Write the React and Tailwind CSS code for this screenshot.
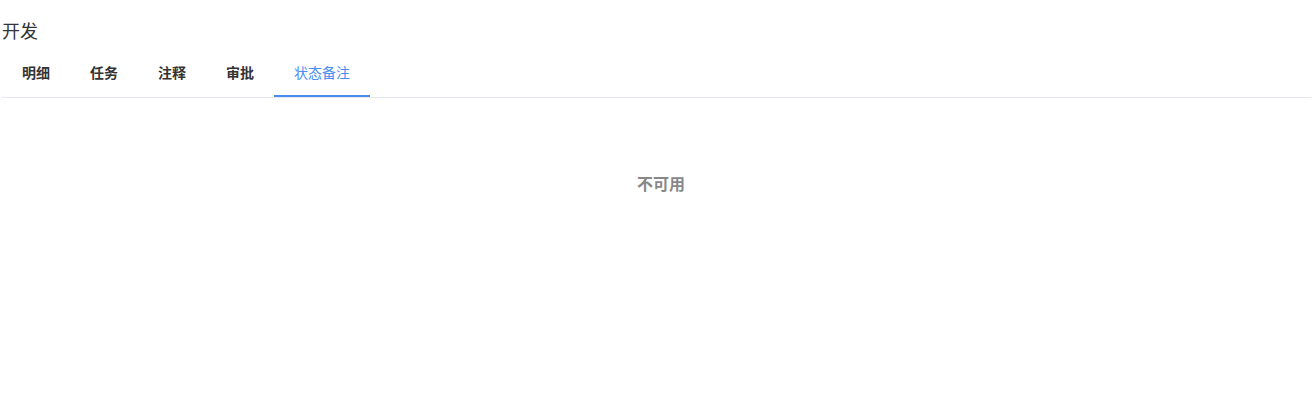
import React, { useState } from 'react';

const tabs = ['明细', '任务', '注释', '审批', '状态备注'];

const App = () => {
  const [active, setActive] = useState(4);

  return (
    <div
      className="min-h-[416px] bg-white px-[2px] text-[#333]"
      style={{ fontFamily: '"Noto Sans CJK SC", "Noto Sans", sans-serif' }}
    >
      <div className="pt-[18px] text-[18px] leading-[24px]">开发</div>
      <div className="flex border-b border-[#e4e7ed]">
        {tabs.map((tab, i) => (
          <button
            key={tab}
            type="button"
            onClick={() => setActive(i)}
            className={
              i === active
                ? 'border-b-2 border-[#4a8cf0] px-5 pt-[20px] pb-[13px] text-[14px] leading-[20px] text-[#4a8cf0]'
                : 'border-b-2 border-transparent px-5 pt-[20px] pb-[13px] text-[14px] font-bold leading-[20px] text-[#333]'
            }
          >
            {tab}
          </button>
        ))}
      </div>
      <div className="pt-[73px] pl-[9px] text-center text-[16px] font-bold leading-[24px] text-[#888]">
        不可用
      </div>
    </div>
  );
};

export default App;
